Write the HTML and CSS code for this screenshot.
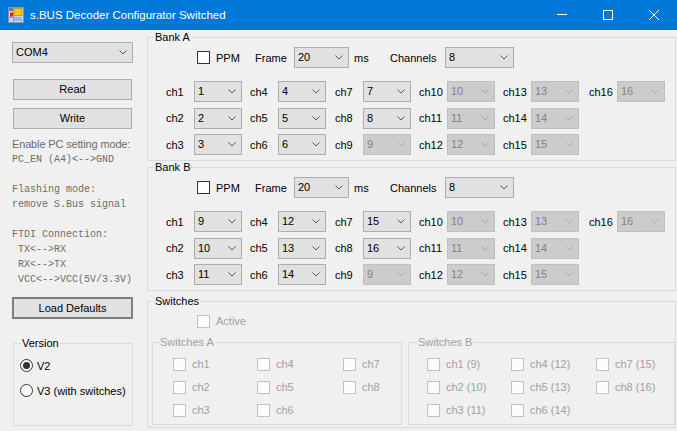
FILE: index.html
```html
<!DOCTYPE html>
<html>
<head>
<meta charset="utf-8">
<title>s.BUS Decoder Configurator Switched</title>
<link rel="stylesheet" href="styles.css">
</head>
<body>
<div class="window">
  <header class="titlebar">
    <svg class="app-icon" width="16" height="16" viewBox="0 0 16 16">
      <rect x="0.5" y="0.5" width="15" height="15" fill="#c8d4ea" stroke="#7f95c4"/>
      <rect x="1" y="1" width="4" height="3" fill="#5d7fc4"/>
      <rect x="6" y="1.5" width="8" height="7" fill="#f6c81a" stroke="#d49a00"/>
      <rect x="2" y="5.5" width="3" height="4" fill="#d42a1e"/>
      <rect x="6" y="10" width="8" height="4" fill="#9fb2de"/>
      <path d="M1 10.5H5M5.5 1V15" stroke="#8da0cc" stroke-width="1"/>
    </svg>
    <span class="title">s.BUS Decoder Configurator Switched</span>
    <div class="controls">
      <span class="ctl"><svg width="10" height="10" viewBox="0 0 10 10"><path d="M0 4.5H10" /></svg></span>
      <span class="ctl"><svg width="10" height="10" viewBox="0 0 10 10"><rect x="0.5" y="0.5" width="9" height="9" fill="none"/></svg></span>
      <span class="ctl"><svg width="10" height="10" viewBox="0 0 10 10"><path d="M0 0L10 10M10 0L0 10"/></svg></span>
    </div>
  </header>

  <main class="client">
    <aside class="left">
      <div class="combo com"><span class="val">COM4</span><svg class="chev" viewBox="0 0 8 5"><path d="M0.5 0.5L4 4L7.5 0.5"/></svg></div>
      <button class="btn read">Read</button>
      <button class="btn write">Write</button>
      <div class="notes">
        <div class="note-sans">Enable PC setting mode:</div>
        <div class="note-mono">PC_EN (A4)&lt;--&gt;GND</div>
        <div class="note-mono">&nbsp;</div>
        <div class="note-mono">Flashing mode:</div>
        <div class="note-mono">remove S.Bus signal</div>
        <div class="note-mono">&nbsp;</div>
        <div class="note-mono">FTDI Connection:</div>
        <div class="note-mono">&nbsp;TX&lt;--&gt;RX</div>
        <div class="note-mono">&nbsp;RX&lt;--&gt;TX</div>
        <div class="note-mono">&nbsp;VCC&lt;--&gt;VCC(5V/3.3V)</div>
      </div>
      <button class="btn defaults">Load Defaults</button>
      <fieldset class="group version">
        <legend>Version</legend>
        <label class="radio-row first"><span class="radio on"></span><span>V2</span></label>
        <label class="radio-row"><span class="radio"></span><span>V3 (with switches)</span></label>
      </fieldset>
    </aside>

    <section class="right">
      <fieldset class="group bank">
        <legend>Bank A</legend>
        <div class="bank-head">
          <span class="cb"></span>
          <span class="lbl-ppm">PPM</span>
          <span class="lbl-frame">Frame</span>
          <div class="combo frame"><span class="val">20</span><svg class="chev" viewBox="0 0 8 5"><path d="M0.5 0.5L4 4L7.5 0.5"/></svg></div>
          <span class="lbl-ms">ms</span>
          <span class="lbl-ch">Channels</span>
          <div class="combo chans"><span class="val">8</span><svg class="chev" viewBox="0 0 8 5"><path d="M0.5 0.5L4 4L7.5 0.5"/></svg></div>
        </div>
        <div class="ch-grid">
          <div class="cell"><span class="chl">ch1</span><div class="combo ch"><span class="val">1</span><svg class="chev" viewBox="0 0 8 5"><path d="M0.5 0.5L4 4L7.5 0.5"/></svg></div></div>
          <div class="cell"><span class="chl">ch4</span><div class="combo ch"><span class="val">4</span><svg class="chev" viewBox="0 0 8 5"><path d="M0.5 0.5L4 4L7.5 0.5"/></svg></div></div>
          <div class="cell"><span class="chl">ch7</span><div class="combo ch"><span class="val">7</span><svg class="chev" viewBox="0 0 8 5"><path d="M0.5 0.5L4 4L7.5 0.5"/></svg></div></div>
          <div class="cell"><span class="chl">ch10</span><div class="combo ch dis"><span class="val">10</span><svg class="chev" viewBox="0 0 8 5"><path d="M0.5 0.5L4 4L7.5 0.5"/></svg></div></div>
          <div class="cell"><span class="chl">ch13</span><div class="combo ch dis"><span class="val">13</span><svg class="chev" viewBox="0 0 8 5"><path d="M0.5 0.5L4 4L7.5 0.5"/></svg></div></div>
          <div class="cell"><span class="chl">ch16</span><div class="combo ch dis"><span class="val">16</span><svg class="chev" viewBox="0 0 8 5"><path d="M0.5 0.5L4 4L7.5 0.5"/></svg></div></div>

          <div class="cell"><span class="chl">ch2</span><div class="combo ch"><span class="val">2</span><svg class="chev" viewBox="0 0 8 5"><path d="M0.5 0.5L4 4L7.5 0.5"/></svg></div></div>
          <div class="cell"><span class="chl">ch5</span><div class="combo ch"><span class="val">5</span><svg class="chev" viewBox="0 0 8 5"><path d="M0.5 0.5L4 4L7.5 0.5"/></svg></div></div>
          <div class="cell"><span class="chl">ch8</span><div class="combo ch"><span class="val">8</span><svg class="chev" viewBox="0 0 8 5"><path d="M0.5 0.5L4 4L7.5 0.5"/></svg></div></div>
          <div class="cell"><span class="chl">ch11</span><div class="combo ch dis"><span class="val">11</span><svg class="chev" viewBox="0 0 8 5"><path d="M0.5 0.5L4 4L7.5 0.5"/></svg></div></div>
          <div class="cell"><span class="chl">ch14</span><div class="combo ch dis"><span class="val">14</span><svg class="chev" viewBox="0 0 8 5"><path d="M0.5 0.5L4 4L7.5 0.5"/></svg></div></div>
          <div class="cell empty"></div>

          <div class="cell"><span class="chl">ch3</span><div class="combo ch"><span class="val">3</span><svg class="chev" viewBox="0 0 8 5"><path d="M0.5 0.5L4 4L7.5 0.5"/></svg></div></div>
          <div class="cell"><span class="chl">ch6</span><div class="combo ch"><span class="val">6</span><svg class="chev" viewBox="0 0 8 5"><path d="M0.5 0.5L4 4L7.5 0.5"/></svg></div></div>
          <div class="cell"><span class="chl">ch9</span><div class="combo ch dis"><span class="val">9</span><svg class="chev" viewBox="0 0 8 5"><path d="M0.5 0.5L4 4L7.5 0.5"/></svg></div></div>
          <div class="cell"><span class="chl">ch12</span><div class="combo ch dis"><span class="val">12</span><svg class="chev" viewBox="0 0 8 5"><path d="M0.5 0.5L4 4L7.5 0.5"/></svg></div></div>
          <div class="cell"><span class="chl">ch15</span><div class="combo ch dis"><span class="val">15</span><svg class="chev" viewBox="0 0 8 5"><path d="M0.5 0.5L4 4L7.5 0.5"/></svg></div></div>
        </div>
      </fieldset>

      <fieldset class="group bank">
        <legend>Bank B</legend>
        <div class="bank-head">
          <span class="cb"></span>
          <span class="lbl-ppm">PPM</span>
          <span class="lbl-frame">Frame</span>
          <div class="combo frame"><span class="val">20</span><svg class="chev" viewBox="0 0 8 5"><path d="M0.5 0.5L4 4L7.5 0.5"/></svg></div>
          <span class="lbl-ms">ms</span>
          <span class="lbl-ch">Channels</span>
          <div class="combo chans"><span class="val">8</span><svg class="chev" viewBox="0 0 8 5"><path d="M0.5 0.5L4 4L7.5 0.5"/></svg></div>
        </div>
        <div class="ch-grid">
          <div class="cell"><span class="chl">ch1</span><div class="combo ch"><span class="val">9</span><svg class="chev" viewBox="0 0 8 5"><path d="M0.5 0.5L4 4L7.5 0.5"/></svg></div></div>
          <div class="cell"><span class="chl">ch4</span><div class="combo ch"><span class="val">12</span><svg class="chev" viewBox="0 0 8 5"><path d="M0.5 0.5L4 4L7.5 0.5"/></svg></div></div>
          <div class="cell"><span class="chl">ch7</span><div class="combo ch"><span class="val">15</span><svg class="chev" viewBox="0 0 8 5"><path d="M0.5 0.5L4 4L7.5 0.5"/></svg></div></div>
          <div class="cell"><span class="chl">ch10</span><div class="combo ch dis"><span class="val">10</span><svg class="chev" viewBox="0 0 8 5"><path d="M0.5 0.5L4 4L7.5 0.5"/></svg></div></div>
          <div class="cell"><span class="chl">ch13</span><div class="combo ch dis"><span class="val">13</span><svg class="chev" viewBox="0 0 8 5"><path d="M0.5 0.5L4 4L7.5 0.5"/></svg></div></div>
          <div class="cell"><span class="chl">ch16</span><div class="combo ch dis"><span class="val">16</span><svg class="chev" viewBox="0 0 8 5"><path d="M0.5 0.5L4 4L7.5 0.5"/></svg></div></div>

          <div class="cell"><span class="chl">ch2</span><div class="combo ch"><span class="val">10</span><svg class="chev" viewBox="0 0 8 5"><path d="M0.5 0.5L4 4L7.5 0.5"/></svg></div></div>
          <div class="cell"><span class="chl">ch5</span><div class="combo ch"><span class="val">13</span><svg class="chev" viewBox="0 0 8 5"><path d="M0.5 0.5L4 4L7.5 0.5"/></svg></div></div>
          <div class="cell"><span class="chl">ch8</span><div class="combo ch"><span class="val">16</span><svg class="chev" viewBox="0 0 8 5"><path d="M0.5 0.5L4 4L7.5 0.5"/></svg></div></div>
          <div class="cell"><span class="chl">ch11</span><div class="combo ch dis"><span class="val">11</span><svg class="chev" viewBox="0 0 8 5"><path d="M0.5 0.5L4 4L7.5 0.5"/></svg></div></div>
          <div class="cell"><span class="chl">ch14</span><div class="combo ch dis"><span class="val">14</span><svg class="chev" viewBox="0 0 8 5"><path d="M0.5 0.5L4 4L7.5 0.5"/></svg></div></div>
          <div class="cell empty"></div>

          <div class="cell"><span class="chl">ch3</span><div class="combo ch"><span class="val">11</span><svg class="chev" viewBox="0 0 8 5"><path d="M0.5 0.5L4 4L7.5 0.5"/></svg></div></div>
          <div class="cell"><span class="chl">ch6</span><div class="combo ch"><span class="val">14</span><svg class="chev" viewBox="0 0 8 5"><path d="M0.5 0.5L4 4L7.5 0.5"/></svg></div></div>
          <div class="cell"><span class="chl">ch9</span><div class="combo ch dis"><span class="val">9</span><svg class="chev" viewBox="0 0 8 5"><path d="M0.5 0.5L4 4L7.5 0.5"/></svg></div></div>
          <div class="cell"><span class="chl">ch12</span><div class="combo ch dis"><span class="val">12</span><svg class="chev" viewBox="0 0 8 5"><path d="M0.5 0.5L4 4L7.5 0.5"/></svg></div></div>
          <div class="cell"><span class="chl">ch15</span><div class="combo ch dis"><span class="val">15</span><svg class="chev" viewBox="0 0 8 5"><path d="M0.5 0.5L4 4L7.5 0.5"/></svg></div></div>
        </div>
      </fieldset>

      <fieldset class="group switches">
        <legend>Switches</legend>
        <label class="chk active-row"><span class="cb dis"></span><span class="dis-text">Active</span></label>
        <div class="sw-row">
          <fieldset class="group sw sw-a">
            <legend class="dis-text">Switches A</legend>
            <div class="sw-grid">
              <label class="chk"><span class="cb dis"></span><span class="dis-text">ch1</span></label>
              <label class="chk"><span class="cb dis"></span><span class="dis-text">ch4</span></label>
              <label class="chk"><span class="cb dis"></span><span class="dis-text">ch7</span></label>
              <label class="chk"><span class="cb dis"></span><span class="dis-text">ch2</span></label>
              <label class="chk"><span class="cb dis"></span><span class="dis-text">ch5</span></label>
              <label class="chk"><span class="cb dis"></span><span class="dis-text">ch8</span></label>
              <label class="chk"><span class="cb dis"></span><span class="dis-text">ch3</span></label>
              <label class="chk"><span class="cb dis"></span><span class="dis-text">ch6</span></label>
            </div>
          </fieldset>
          <fieldset class="group sw sw-b">
            <legend class="dis-text">Switches B</legend>
            <div class="sw-grid">
              <label class="chk"><span class="cb dis"></span><span class="dis-text">ch1 (9)</span></label>
              <label class="chk"><span class="cb dis"></span><span class="dis-text">ch4 (12)</span></label>
              <label class="chk"><span class="cb dis"></span><span class="dis-text">ch7 (15)</span></label>
              <label class="chk"><span class="cb dis"></span><span class="dis-text">ch2 (10)</span></label>
              <label class="chk"><span class="cb dis"></span><span class="dis-text">ch5 (13)</span></label>
              <label class="chk"><span class="cb dis"></span><span class="dis-text">ch8 (16)</span></label>
              <label class="chk"><span class="cb dis"></span><span class="dis-text">ch3 (11)</span></label>
              <label class="chk"><span class="cb dis"></span><span class="dis-text">ch6 (14)</span></label>
            </div>
          </fieldset>
        </div>
      </fieldset>
    </section>
  </main>
</div>
</body>
</html>
```

FILE: styles.css
```css
* { box-sizing: border-box; }

html, body {
  margin: 0;
  padding: 0;
  width: 677px;
  height: 431px;
  overflow: hidden;
  background: #f0f0f0;
}

body {
  font-family: "Liberation Sans", Arial, sans-serif;
  font-size: 11px;
  color: #000;
}

.window {
  width: 677px;
  height: 431px;
  display: flex;
  flex-direction: column;
  background: #f0f0f0;
}

/* ---------- title bar ---------- */
.titlebar {
  height: 30px;
  flex: 0 0 30px;
  background: #0078d7;
  display: flex;
  align-items: center;
  color: #fff;
}
.app-icon {
  margin-left: 8px;
  flex: 0 0 16px;
  display: block;
}
.title {
  margin-left: 6px;
  font-family: "Liberation Sans", Arial, sans-serif;
  font-size: 11.5px;
  flex: 1;
  white-space: nowrap;
}
.controls {
  display: flex;
  height: 30px;
}
.ctl {
  width: 46px;
  height: 30px;
  display: flex;
  align-items: center;
  justify-content: center;
}
.ctl svg {
  display: block;
  stroke: #fff;
  stroke-width: 1;
}

/* ---------- client ---------- */
.client {
  flex: 1;
  display: flex;
  align-items: flex-start;
}

.left {
  width: 121px;
  margin-left: 12px;
  margin-top: 12px;
  display: flex;
  flex-direction: column;
}

.right {
  width: 529px;
  margin-left: 14px;
  margin-top: 1px;
  display: flex;
  flex-direction: column;
}

/* ---------- combo box ---------- */
.combo {
  display: flex;
  align-items: center;
  height: 21px;
  border: 1px solid #adadad;
  background: #e1e1e1;
  padding-left: 3px;
  line-height: 13px;
  color: #000;
  white-space: nowrap;
}
.combo .val { flex: 1; }
.chev {
  width: 8px;
  height: 5px;
  margin-right: 5px;
  flex: 0 0 8px;
  fill: none;
  stroke: #5a5a5a;
  stroke-width: 1;
}
.combo.dis {
  background: #cccccc;
  border-color: #bfbfbf;
  color: #838383;
}
.combo.dis .chev { stroke: #a9a9a9; }

.com { width: 121px; }

/* ---------- buttons ---------- */
.btn {
  font-family: "Liberation Sans", Arial, sans-serif;
  font-size: 11px;
  font-weight: normal;
  color: #000;
  background: #e1e1e1;
  border: 1px solid #adadad;
  padding: 0;
  height: 21px;
  line-height: 13px;
  text-align: center;
}
.read  { margin-top: 16px; margin-left: 1px; width: 119px; }
.write { margin-top: 8px;  margin-left: 1px; width: 119px; }
.defaults {
  margin-top: 10px;
  width: 121px;
  height: 22px;
  border: 2px solid #7f7f7f;
}

/* ---------- notes ---------- */
.notes {
  margin-top: 8px;
  color: #6d6d6d;
}
.note-sans {
  line-height: 15px;
  font-size: 11px;
  letter-spacing: -0.15px;
  white-space: nowrap;
}
.note-mono {
  font-family: "Liberation Mono", "Courier New", monospace;
  font-size: 10px;
  line-height: 15px;
  white-space: pre;
}

/* ---------- group boxes ---------- */
.group {
  margin: 0;
  padding: 0;
  min-width: 0;
  border: 1px solid #dcdcdc;
}
.group > legend {
  padding: 0 1px;
  margin-left: 6px;
  line-height: 13px;
  font-size: 11px;
}

.version {
  margin-top: 18px;
  margin-left: 1px;
  width: 120px;
  padding: 0 0 28px 0;
}
.version > legend { margin-left: 7px; }
.radio-row {
  display: flex;
  align-items: center;
  height: 13px;
  margin-top: 12px;
  margin-left: 6px;
}
.radio-row.first { margin-top: 9px; }
.radio {
  width: 13px;
  height: 13px;
  border: 1px solid #333;
  border-radius: 50%;
  background: #fff;
  margin-right: 4px;
  display: flex;
  align-items: center;
  justify-content: center;
}
.radio.on::after {
  content: "";
  width: 7px;
  height: 7px;
  border-radius: 50%;
  background: #333;
}

/* ---------- banks ---------- */
.bank {
  width: 529px;
  padding: 0 0 5px 0;
}
.bank-head {
  margin-top: 3px;
  height: 21px;
  display: flex;
  align-items: center;
  padding-left: 49px;
}
.cb {
  width: 13px;
  height: 13px;
  flex: 0 0 13px;
  border: 1px solid #333;
  background: #fff;
}
.cb.dis {
  border-color: #c2c2c2;
  background: #fcfcfc;
}
.lbl-ppm   { margin-left: 6px; width: 39px; }
.lbl-frame { width: 39px; }
.combo.frame { width: 55px; }
.lbl-ms    { margin-left: 5px; width: 36px; }
.lbl-ch    { width: 55px; }
.combo.chans { width: 69px; }

.ch-grid {
  margin-top: 13px;
  margin-left: 18px;
  display: grid;
  grid-template-columns: 84px 85px 84px 84px 86px 77px;
  grid-auto-rows: 21px;
  row-gap: 5.5px;
}
.cell {
  display: flex;
  align-items: center;
}
.chl { width: 28px; flex: 0 0 28px; }
.combo.ch { width: 48px; }

/* ---------- switches ---------- */
.switches {
  margin-top: 4px;
  width: 529px;
  padding: 0 0 2px 0;
}
.chk {
  display: flex;
  align-items: center;
  height: 13px;
  line-height: 13px;
  white-space: nowrap;
}
.chk .cb { margin-right: 6px; }
.active-row {
  margin-top: 7px;
  margin-left: 49px;
}
.dis-text { color: #a0a0a0; }

.sw-row {
  display: flex;
  margin-top: 8px;
  margin-left: 4px;
  gap: 6px;
}
.sw {
  padding: 0 0 7px 0;
}
.sw-a { width: 250px; }
.sw-b { width: 267px; }
.sw-b > legend { margin-left: 8px; }

.sw-grid {
  display: grid;
  grid-auto-rows: 13px;
  row-gap: 10px;
  margin-top: 9px;
}
.sw-a .sw-grid {
  margin-left: 20px;
  grid-template-columns: 84px 86px auto;
}
.sw-b .sw-grid {
  margin-left: 18px;
  grid-template-columns: 84px 85px auto;
}
```
